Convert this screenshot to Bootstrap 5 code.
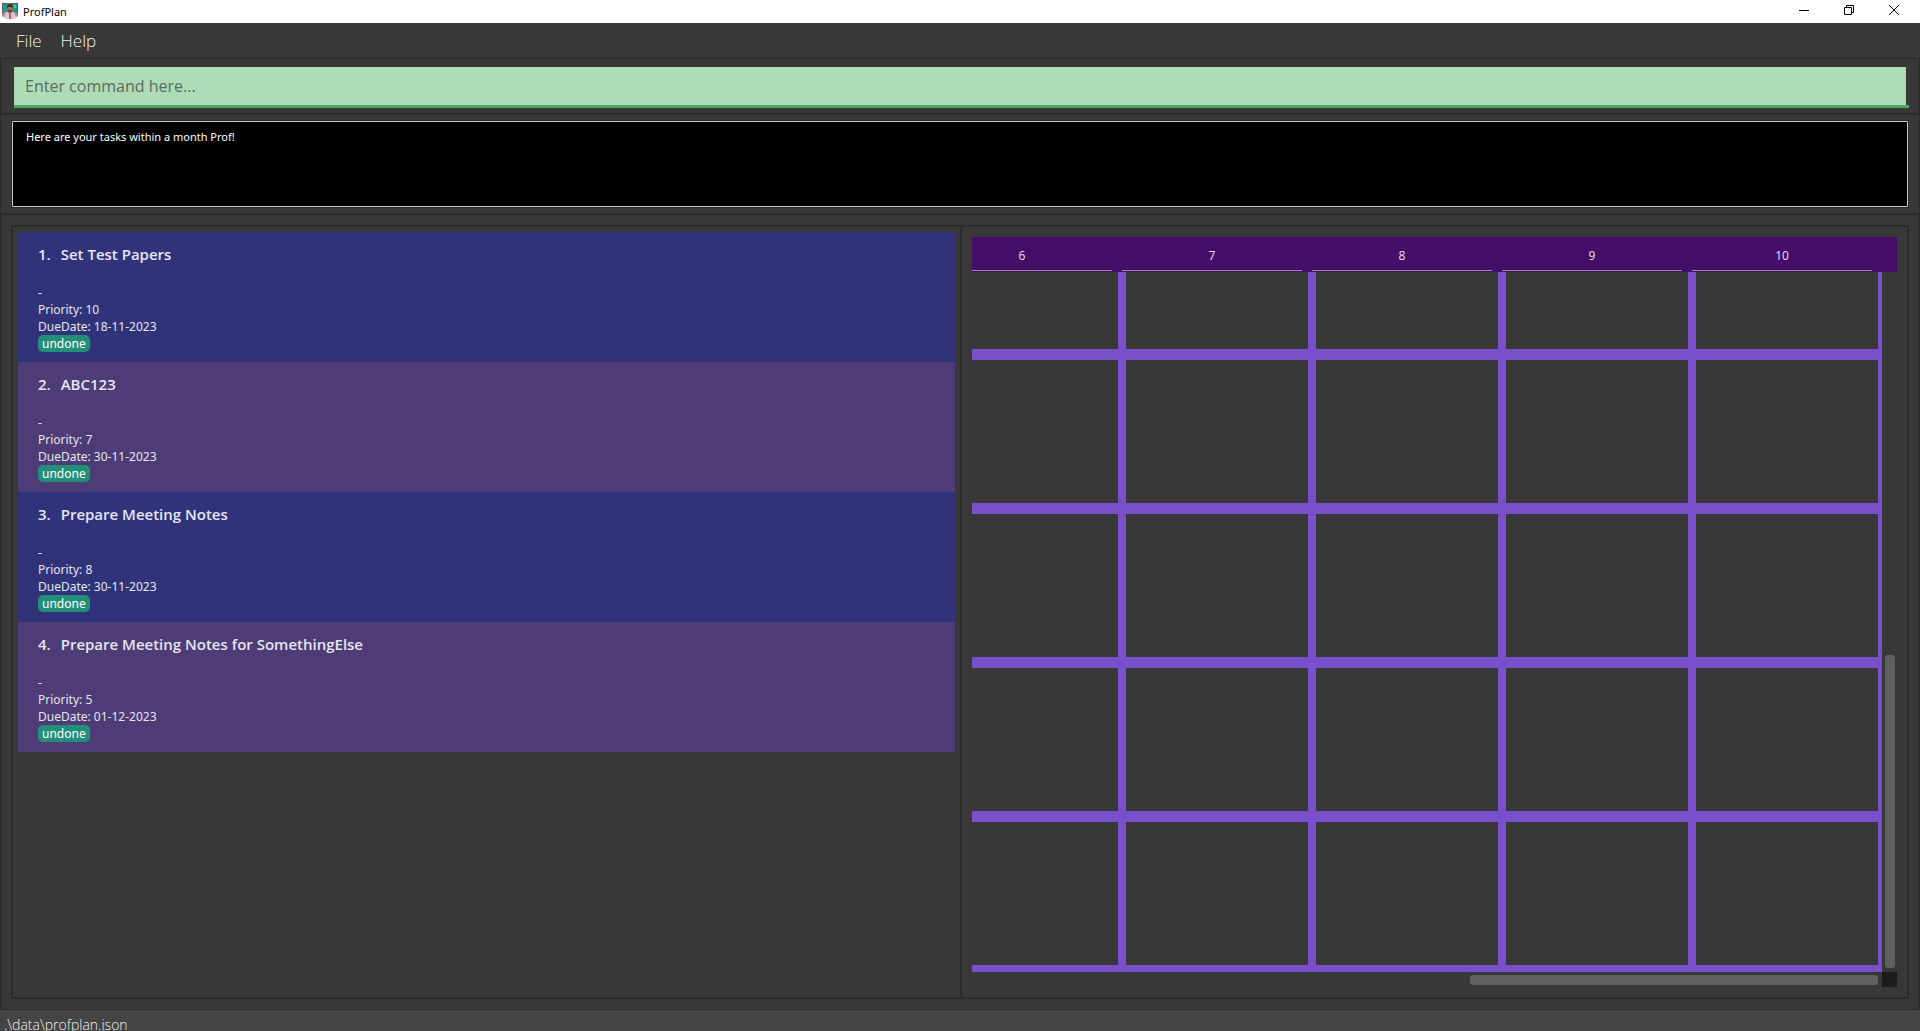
<!DOCTYPE html>
<html lang="en">
<head>
<meta charset="utf-8">
<meta name="viewport" content="width=device-width, initial-scale=1">
<title>ProfPlan</title>
<link rel="stylesheet" href="https://cdn.jsdelivr.net/npm/bootstrap@5.3.0/dist/css/bootstrap.min.css">
<style>
  :root { --pane: #383838; --edge: #2b2b2b; --grid: #7a4fcb; }
  body { font-family: "Open Sans", "Noto Sans", sans-serif; background: var(--pane); color: #e6e6ee; }
  .title-strip { height: 23px; background: #fff; color: #000; line-height: 17px; }
  .title-brand { padding: 3px 0 0 2px; gap: 5px; }
  .title-name { font-family: "Noto Sans", sans-serif; font-size: 11px; }
  .win-btn { width: 45px; height: 20px; background: none; border: 0; }
  .menu-strip { height: 35px; padding-left: 16px; gap: 19px; }
  .menu-strip button { background: none; border: 0; padding: 0; font-weight: 300; font-size: 17px; line-height: 35px; color: #f0f0f0; }
  .zone { border: 1px solid var(--edge); border-bottom-width: 0; }
  .zone + .zone { border-top-width: 2px; }
  .cmd-zone { padding: 8px 10px 5px 13px; }
  .cmd-line { border-bottom: 3px solid #4fa863; padding-right: 3px; }
  .cmd-line input { height: 38px; border: 0; border-radius: 0; background: #aedcb7; padding: 0 11px; font-size: 16px; color: #555; }
  .cmd-line input:focus { background: #aedcb7; box-shadow: none; }
  .cmd-line input::placeholder { color: #5a6b5e; }
  .reply-zone { padding: 5px 10px; }
  .reply-frame { border: 1px solid var(--edge); }
  .reply-box { height: 86px; background: #000; border: 1px solid #c8c8c8; border-radius: 1px; padding: 6px 13px; font-family: "Noto Sans", sans-serif; font-size: 11px; line-height: 18px; color: #fff; }
  .main-zone { padding: 10px; border-bottom-width: 1px; min-height: 0; }
  .split { border: 2px solid var(--edge); min-height: 0; }
  .list-pane { padding: 5px; width: 50%; }
  .cal-pane { padding: 10px; flex: 1 1 0; min-width: 0; border-left: 2px solid var(--edge); }
  .list-pane { box-sizing: border-box; }
  .task { background: #30337a; padding: 10px 20px; height: 130px; font-family: "Noto Sans", sans-serif; font-size: 12px; line-height: 17px; }
  .task:nth-child(even) { background: #4d3c76; }
  .task h2 { font-family: "Open Sans", sans-serif; font-size: 15px; line-height: 25px; font-weight: 600; margin: 0 0 17px; color: #e6e6f0; }
  .task h2 span { margin-right: 10px; }
  .state { background: #238f78; color: #fff; border-radius: 5px; padding: 0 4px; width: max-content; }
  .cal-head { height: 35px; background: #450f69; padding-right: 15px; overflow: hidden; }
  .day { flex: 0 0 190px; padding-right: 10px; font-size: 12px; line-height: 38px; color: #e8e0ee; }
  .day div { height: 34px; border-bottom: 1px solid #8e8e8e; text-align: center; }
  .cal-view { overflow: hidden; min-height: 0; min-width: 0; }
  .cal-table { width: 950px; flex: none; table-layout: fixed; border-collapse: separate; border-spacing: 0; }
  .cal-table td { height: 154px; padding: 0; border: solid var(--grid); border-width: 4px 4px 7px; }
  .v-track { width: 15px; padding: 0 2px 4px 3px; }
  .h-track { height: 15px; padding: 3px 4px 2px 0; }
  .thumb { background: #606060; border-radius: 3px; }
  .v-track .thumb { height: 45%; }
  .h-track .thumb { width: 45%; }
  .corner { width: 15px; background: #1c1c1c; }
  .status-strip { height: 21px; background: #444; padding-left: 4px; font-weight: 300; font-size: 14px; line-height: 30px; overflow: hidden; color: #f0f0f0; }
</style>
<script src="https://cdn.jsdelivr.net/npm/bootstrap@5.3.0/dist/js/bootstrap.bundle.min.js"></script>
</head>
<body class="d-flex flex-column vh-100 overflow-hidden">
  <header class="title-strip d-flex flex-shrink-0 align-items-start">
    <div class="title-brand d-flex flex-grow-1">
      <svg width="16" height="16" viewBox="0 0 16 16" aria-hidden="true">
        <path d="M0 0h16v11l-2 3H2l-2-3z" fill="#6b5560"/>
        <path d="M1 1h14v10H1z" fill="#16a083"/>
        <path d="M11 2h3v3h-2z" fill="#55c79c"/>
        <path d="M1 14q0-4 4-5h6q4 1 4 5l-3 2H4z" fill="#d3cdd6"/>
        <path d="M0 10l4-1-2 5-2-1zM16 10l-4-1 2 5 2-1z" fill="#ad8290"/>
        <path d="M5 4h6v4l-2 2.500H7L5 8z" fill="#a86a50"/>
        <path d="M5 6V3q1-2 3-2t3 2v3l-1-2H6z" fill="#3d2b34"/>
        <path d="M6 7h4v1L9 9H7L6 8z" fill="#593d3b"/>
        <path d="M7 10h2v6H7z" fill="#e8456b"/>
      </svg>
      <span class="title-name">ProfPlan</span>
    </div>
    <button class="win-btn d-flex align-items-center justify-content-center p-0" aria-label="Minimize"><svg width="10" height="10" viewBox="0 0 10 10"><path d="M0 5.500h10" stroke="#000"/></svg></button>
    <button class="win-btn d-flex align-items-center justify-content-center p-0" aria-label="Restore"><svg width="10" height="10" viewBox="0 0 10 10"><path d="M.5 2.500h7v7h-7zM2.500 2.500v-2h7v7h-2" fill="none" stroke="#000"/></svg></button>
    <button class="win-btn d-flex align-items-center justify-content-center p-0 me-1" aria-label="Close"><svg width="10" height="10" viewBox="0 0 10 10"><path d="M0 0l10 10M10 0L0 10" stroke="#000"/></svg></button>
  </header>

  <nav class="menu-strip d-flex flex-shrink-0" aria-label="Main menu">
    <button type="button">File</button>
    <button type="button">Help</button>
  </nav>

  <section class="zone cmd-zone flex-shrink-0">
    <div class="cmd-line"><input class="form-control" type="text" aria-label="Command" placeholder="Enter command here..."></div>
  </section>

  <section class="zone reply-zone flex-shrink-0">
    <div class="reply-frame"><div class="reply-box">Here are your tasks within a month Prof!</div></div>
  </section>

  <main class="zone main-zone flex-grow-1 d-flex">
    <div class="split d-flex flex-grow-1">
      <div class="list-pane">
        <article class="task">
          <h2><span>1.</span>Set Test Papers</h2>
          <div>-</div><div>Priority: 10</div><div>DueDate: 18-11-2023</div><div class="state">undone</div>
        </article>
        <article class="task">
          <h2><span>2.</span>ABC123</h2>
          <div>-</div><div>Priority: 7</div><div>DueDate: 30-11-2023</div><div class="state">undone</div>
        </article>
        <article class="task">
          <h2><span>3.</span>Prepare Meeting Notes</h2>
          <div>-</div><div>Priority: 8</div><div>DueDate: 30-11-2023</div><div class="state">undone</div>
        </article>
        <article class="task">
          <h2><span>4.</span>Prepare Meeting Notes for SomethingElse</h2>
          <div>-</div><div>Priority: 5</div><div>DueDate: 01-12-2023</div><div class="state">undone</div>
        </article>
      </div>
      <div class="cal-pane d-flex flex-column">
        <div class="cal-head d-flex justify-content-end flex-shrink-0">
          <div class="day"><div>6</div></div>
          <div class="day"><div>7</div></div>
          <div class="day"><div>8</div></div>
          <div class="day"><div>9</div></div>
          <div class="day"><div>10</div></div>
        </div>
        <div class="d-flex flex-grow-1 cal-view">
          <div class="cal-view flex-grow-1 d-flex justify-content-end align-items-end">
            <table class="cal-table" aria-label="Calendar">
              <tbody>
                <tr><td></td><td></td><td></td><td></td><td></td></tr>
                <tr><td></td><td></td><td></td><td></td><td></td></tr>
                <tr><td></td><td></td><td></td><td></td><td></td></tr>
                <tr><td></td><td></td><td></td><td></td><td></td></tr>
                <tr><td></td><td></td><td></td><td></td><td></td></tr>
              </tbody>
            </table>
          </div>
          <div class="v-track d-flex flex-column justify-content-end flex-shrink-0"><div class="thumb"></div></div>
        </div>
        <div class="d-flex flex-shrink-0">
          <div class="h-track flex-grow-1 d-flex justify-content-end"><div class="thumb"></div></div>
          <div class="corner"></div>
        </div>
      </div>
    </div>
  </main>

  <footer class="status-strip flex-shrink-0">.\data\profplan.json</footer>
</body>
</html>
